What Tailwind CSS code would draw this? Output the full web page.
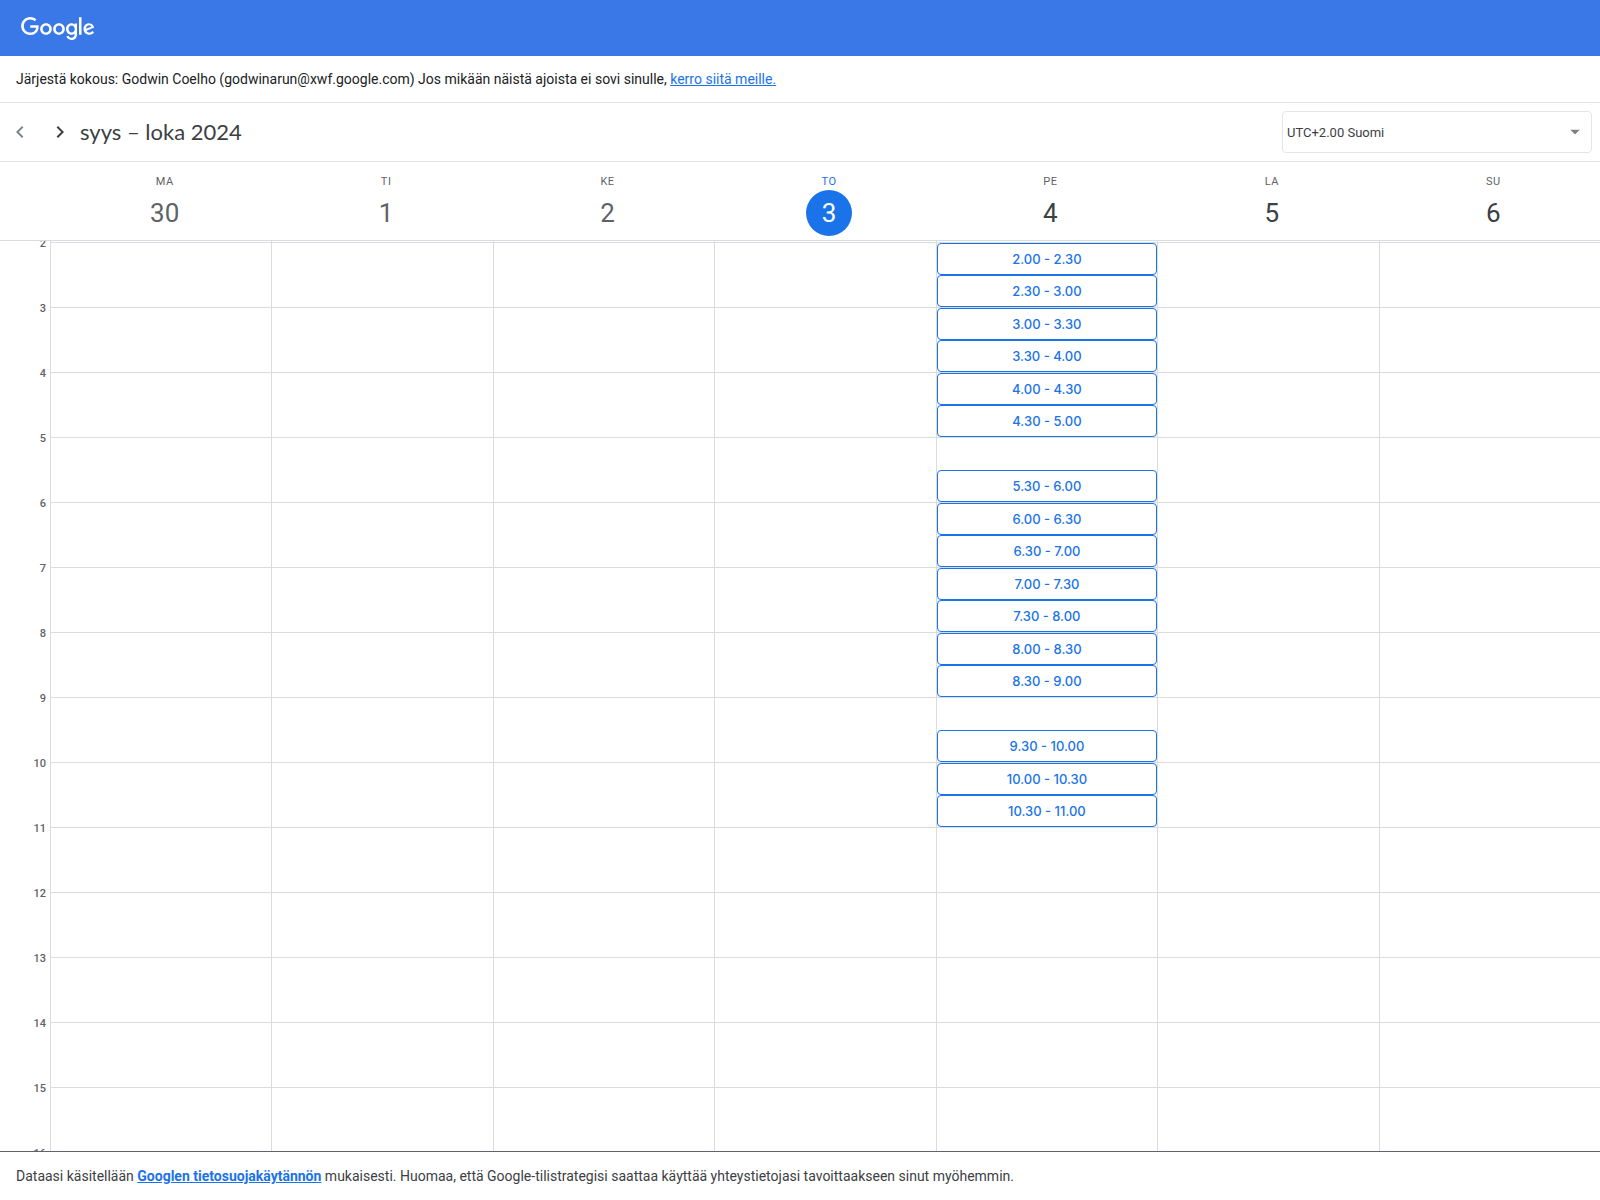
<!DOCTYPE html>
<html lang="fi">
<head>
<meta charset="utf-8">
<meta name="viewport" content="width=device-width, initial-scale=1">
<title>Ajanvaraus</title>
<script src="https://cdn.jsdelivr.net/npm/@tailwindcss/browser@4"></script>
</head>
<body class="flex h-screen flex-col overflow-hidden bg-white font-['Roboto',sans-serif] text-[#3c4043]">

<header class="flex h-14 shrink-0 items-center bg-[#3b78e7] px-[21px] pt-0.5">
  <svg class="h-6 w-[74px]" viewBox="0 0 74 24" fill="#fff" role="img" aria-label="Google">
    <path d="M9.24 8.19v2.46h5.88c-.18 1.38-.64 2.39-1.34 3.1-.86.86-2.2 1.8-4.54 1.8-3.62 0-6.45-2.92-6.45-6.54s2.83-6.54 6.45-6.54c1.95 0 3.38.77 4.43 1.76L15.4 2.5C13.94 1.08 11.98 0 9.24 0 4.28 0 .11 4.04.11 9s4.17 9 9.13 9c2.68 0 4.7-.88 6.28-2.52 1.62-1.62 2.13-3.91 2.13-5.75 0-.57-.04-1.1-.13-1.54H9.24z"/>
    <path d="M25 6.19c-3.21 0-5.83 2.44-5.83 5.81 0 3.34 2.62 5.81 5.83 5.81s5.83-2.46 5.83-5.81c0-3.37-2.62-5.81-5.83-5.81zm0 9.33c-1.76 0-3.28-1.45-3.28-3.52 0-2.09 1.52-3.52 3.28-3.52s3.28 1.43 3.28 3.52c0 2.07-1.52 3.52-3.28 3.52z"/>
    <path d="M38 6.19c-3.21 0-5.83 2.44-5.83 5.81 0 3.34 2.62 5.81 5.83 5.81s5.83-2.46 5.83-5.81c0-3.37-2.62-5.81-5.83-5.81zm0 9.33c-1.76 0-3.28-1.45-3.28-3.52 0-2.09 1.52-3.52 3.28-3.52s3.28 1.43 3.28 3.52c0 2.07-1.52 3.52-3.28 3.52z"/>
    <path d="M53.58 7.49h-.09c-.57-.68-1.67-1.3-3.06-1.3C47.53 6.19 45 8.72 45 12c0 3.26 2.53 5.81 5.43 5.81 1.39 0 2.49-.62 3.06-1.32h.09v.81c0 2.22-1.19 3.41-3.1 3.41-1.56 0-2.53-1.12-2.93-2.07l-2.22.92c.64 1.54 2.33 3.43 5.15 3.43 2.99 0 5.52-1.76 5.52-6.05V6.49h-2.42v1zm-2.93 8.03c-1.76 0-3.1-1.5-3.1-3.52 0-2.05 1.34-3.52 3.1-3.52 1.74 0 3.1 1.5 3.1 3.54.01 2.03-1.36 3.5-3.1 3.5z"/>
    <path d="M58 .24h2.51v17.57H58z"/>
    <path d="M68.26 15.52c-1.3 0-2.22-.59-2.82-1.76l7.77-3.21-.26-.66c-.48-1.3-1.96-3.7-4.97-3.7-2.99 0-5.48 2.35-5.48 5.81 0 3.26 2.46 5.81 5.76 5.81 2.66 0 4.2-1.63 4.84-2.57l-1.98-1.32c-.66.96-1.56 1.6-2.86 1.6zm-.18-7.15c1.03 0 1.91.53 2.2 1.28l-5.25 2.17c0-2.44 1.73-3.45 3.05-3.45z"/>
  </svg>
</header>

<p class="shrink-0 border-b border-[#e5e5e5] px-4 py-[13px] text-sm text-[#202124]">Järjestä kokous: Godwin Coelho (godwinarun@xwf.google.com) Jos mikään näistä ajoista ei sovi sinulle, <a href="#" class="text-[#1a73e8] underline">kerro siitä meille.</a></p>

<div class="flex shrink-0 items-center border-b border-[#e5e5e5] py-2 pr-2">
  <button type="button" aria-label="Edellinen viikko" class="flex size-10 items-center justify-center" disabled>
    <svg class="size-6" viewBox="0 0 24 24" fill="#80868b"><path d="M15.41 7.41L14 6l-6 6 6 6 1.41-1.41L10.83 12z"/></svg>
  </button>
  <button type="button" aria-label="Seuraava viikko" class="flex size-10 items-center justify-center">
    <svg class="size-6" viewBox="0 0 24 24" fill="#3c4043"><path d="M10 6L8.59 7.41 13.17 12l-4.58 4.59L10 18l6-6z"/></svg>
  </button>
  <h1 class="font-['Lato',sans-serif] text-[22px] leading-7">syys – loka 2024</h1>
  <div class="relative ml-auto w-[310px]">
    <select aria-label="Aikavyöhyke" class="h-[42px] w-full appearance-none rounded border border-[#e5e5e5] bg-white pt-0.5 pr-8 pl-1 text-[13px]">
      <option>UTC+2.00 Suomi</option>
    </select>
    <svg class="pointer-events-none absolute top-1/2 right-3 h-[5px] w-2.5 -translate-y-1/2" viewBox="0 0 10 5" fill="#808080"><path d="M0 0h10L5 5z"/></svg>
  </div>
</div>

<main class="flex min-h-0 flex-1 flex-col overflow-hidden">
  <div id="days" class="-mr-1 ml-[54px] grid h-[78px] shrink-0 grid-cols-7"></div>
  <div class="flex min-h-0 flex-1 overflow-hidden border-t border-[#dadce0]">
    <div id="hours" class="-mt-[5px] w-[50px] shrink-0 pr-1 text-right text-[11px] leading-4 font-medium text-[#5f6368]"></div>
    <div id="week" class="grid h-max flex-1 grid-cols-7"></div>
  </div>
</main>

<footer class="shrink-0 border-t border-[#5f6368] px-4 py-3.5 text-sm">Dataasi käsitellään <a href="#" class="font-bold text-[#1a73e8] underline">Googlen tietosuojakäytännön</a> mukaisesti. Huomaa, että Google-tilistrategisi saattaa käyttää yhteystietojasi tavoittaakseen sinut myöhemmin.</footer>

<script>
  const days = [['MA', 30, 'past'], ['TI', 1, 'past'], ['KE', 2, 'past'], ['TO', 3, 'today'], ['PE', 4, 'next'], ['LA', 5, 'next'], ['SU', 6, 'next']];
  const nameStyle = { past: 'text-[#5f6368]', today: 'text-[#1a73e8]', next: 'text-[#5f6368]' };
  const numberStyle = { past: 'text-[#5f6368]', today: 'bg-[#1a73e8] text-white', next: 'text-[#3c4043]' };
  document.getElementById('days').innerHTML = days.map(([name, number, kind]) => `
    <div class="flex flex-col items-center pt-3">
      <span class="text-[11px] leading-4 tracking-wider ${nameStyle[kind]}">${name}</span>
      <span class="flex size-[46px] items-center justify-center rounded-full text-[26px] ${numberStyle[kind]}">${number}</span>
    </div>`).join('');

  const hours = Array.from({ length: 15 }, (_, i) => i + 2);
  document.getElementById('hours').innerHTML = hours.map(h => `<div class="h-[65px]">${h}</div>`).join('');

  // Bookable half-hour slots on Friday
  const free = new Set([2, 2.5, 3, 3.5, 4, 4.5, 5.5, 6, 6.5, 7, 7.5, 8, 8.5, 9.5, 10, 10.5]);
  const clock = t => `${Math.floor(t)}.${t % 1 ? '30' : '00'}`;
  const slot = t => free.has(t)
    ? `<button type="button" class="block h-8 w-full rounded border border-[#1a73e8] bg-white font-['Inter',sans-serif] text-[13px] leading-5 font-medium text-[#1a73e8]">${clock(t)} - ${clock(t + 0.5)}</button>`
    : '<div class="h-8"></div>';
  document.getElementById('week').innerHTML = days.map(([name]) => `
    <div class="border-l border-[#dadce0] pt-px">${hours.map(h => `
      <div class="h-[65px] border-t border-[#dadce0]">${name === 'PE' ? slot(h) + slot(h + 0.5) : ''}</div>`).join('')}
    </div>`).join('');
</script>
</body>
</html>
